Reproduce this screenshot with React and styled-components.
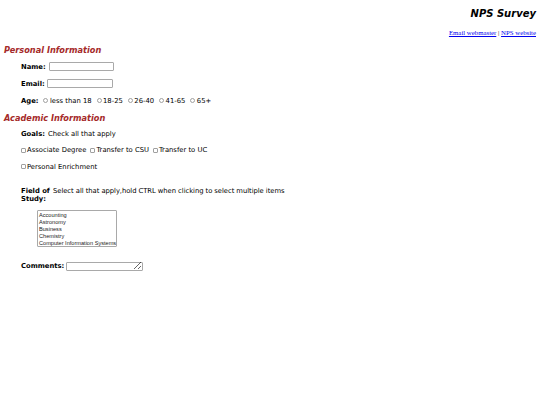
import React from "react";
import styled, { createGlobalStyle } from "styled-components";

const GlobalStyle = createGlobalStyle`
  body {
    margin: 0;
    background: #fff;
    color: #000;
    font-family: "DejaVu Sans", Verdana, sans-serif;
    font-size: 6.8px;
  }
`;

const Page = styled.div`
  padding: 8px 4px 20px;
`;

const Header = styled.div`
  text-align: right;
`;

const Title = styled.h1`
  margin: 0;
  font-size: 10px;
  line-height: 12px;
  font-weight: bold;
  font-style: italic;
`;

const Links = styled.p`
  margin: 9px 0 0;
  font-family: "Liberation Serif", "Times New Roman", serif;
  font-size: 6.8px;
  line-height: 8px;
`;

const Link = styled.a`
  color: #0000ee;
  text-decoration: underline;
`;

const SectionTitle = styled.h2`
  margin: ${(p) => p.$top}px 0 0;
  font-size: 8.2px;
  line-height: 10px;
  font-weight: bold;
  font-style: italic;
  color: #a52a2a;
`;

const Row = styled.div`
  display: flex;
  align-items: center;
  height: 9px;
  margin-top: ${(p) => p.$top}px;
  padding-left: 17px;
  white-space: nowrap;
`;

const Label = styled.label`
  font-weight: bold;
  margin-right: ${(p) => p.$gap ?? 3}px;
`;

const TextInput = styled.input`
  box-sizing: border-box;
  width: ${(p) => p.$w}px;
  height: 9px;
  padding: 0 2px;
  border: 1px solid #a9a9a9;
  border-radius: 1px;
  font-size: 6px;
  outline: none;
`;

const Choice = styled.label`
  display: flex;
  align-items: center;
  margin-right: ${(p) => p.$gap ?? 4}px;
`;

const Radio = styled.input.attrs({ type: "radio" })`
  appearance: none;
  box-sizing: border-box;
  width: 5px;
  height: 5px;
  margin: 0 1.5px 0 0;
  border: 1px solid #a0a0a0;
  border-radius: 50%;
  background: #fff;
`;

const Check = styled.input.attrs({ type: "checkbox" })`
  appearance: none;
  box-sizing: border-box;
  width: 5px;
  height: 5px;
  margin: 0 1px 0 0;
  border: 1px solid #a0a0a0;
  border-radius: 1px;
  background: #fff;
`;

const FieldBlock = styled.div`
  display: flex;
  align-items: flex-start;
  margin-top: ${(p) => p.$top}px;
  padding-left: 17px;
  line-height: 8px;
`;

const FieldLabel = styled.label`
  width: 32px;
  font-weight: bold;
`;

const Hint = styled.span`
  letter-spacing: -0.05px;
`;

const ListBox = styled.div`
  box-sizing: border-box;
  width: 80px;
  height: 37px;
  margin: 7px 0 0 33px;
  padding: 1px 1px 0;
  border: 1px solid #a9a9a9;
  border-radius: 1px;
  font-family: "Liberation Sans", Arial, sans-serif;
  font-size: 5.6px;
  line-height: 7px;
  color: #222;
  overflow: hidden;
`;

const Option = styled.div`
  white-space: nowrap;
`;

const CommentBox = styled.textarea`
  box-sizing: border-box;
  width: 77px;
  height: 9px;
  padding: 0;
  border: 1px solid #a9a9a9;
  border-radius: 1px;
  font-size: 6px;
  resize: both;
  outline: none;
`;

const ages = ["less than 18", "18-25", "26-40", "41-65", "65+"];
const goals = ["Associate Degree", "Transfer to CSU", "Transfer to UC"];
const studies = [
  "Accounting",
  "Astronomy",
  "Business",
  "Chemistry",
  "Computer Information Systems",
];

export default function App() {
  return (
    <>
      <GlobalStyle />
      <Page>
        <Header>
          <Title>NPS Survey</Title>
          <Links>
            <Link href="#">Email webmaster</Link> | <Link href="#">NPS website</Link>
          </Links>
        </Header>

        <SectionTitle $top={7.5}>Personal Information</SectionTitle>
        <Row $top={7.5}>
          <Label htmlFor="name">Name:</Label>
          <TextInput id="name" $w={65} />
        </Row>
        <Row $top={8}>
          <Label htmlFor="email" $gap={2}>Email:</Label>
          <TextInput id="email" $w={66} />
        </Row>
        <Row $top={8}>
          <Label $gap={5}>Age:</Label>
          {ages.map((a) => (
            <Choice key={a} $gap={5}>
              <Radio name="age" />
              {a}
            </Choice>
          ))}
        </Row>

        <SectionTitle $top={7.5}>Academic Information</SectionTitle>
        <Row $top={6.5}>
          <Label>Goals:</Label>
          Check all that apply
        </Row>
        <Row $top={7.5}>
          {goals.map((g) => (
            <Choice key={g} $gap={4}>
              <Check />
              {g}
            </Choice>
          ))}
        </Row>
        <Row $top={7.5}>
          <Choice>
            <Check />
            Personal Enrichment
          </Choice>
        </Row>

        <FieldBlock $top={15.5}>
          <FieldLabel>Field of Study:</FieldLabel>
          <Hint>Select all that apply,hold CTRL when clicking to select multiple items</Hint>
        </FieldBlock>
        <ListBox role="listbox" aria-multiselectable="true">
          {studies.map((s) => (
            <Option key={s} role="option">
              {s}
            </Option>
          ))}
        </ListBox>

        <Row $top={15}>
          <Label htmlFor="comments" $gap={1.5}>Comments:</Label>
          <CommentBox id="comments" />
        </Row>
      </Page>
    </>
  );
}
